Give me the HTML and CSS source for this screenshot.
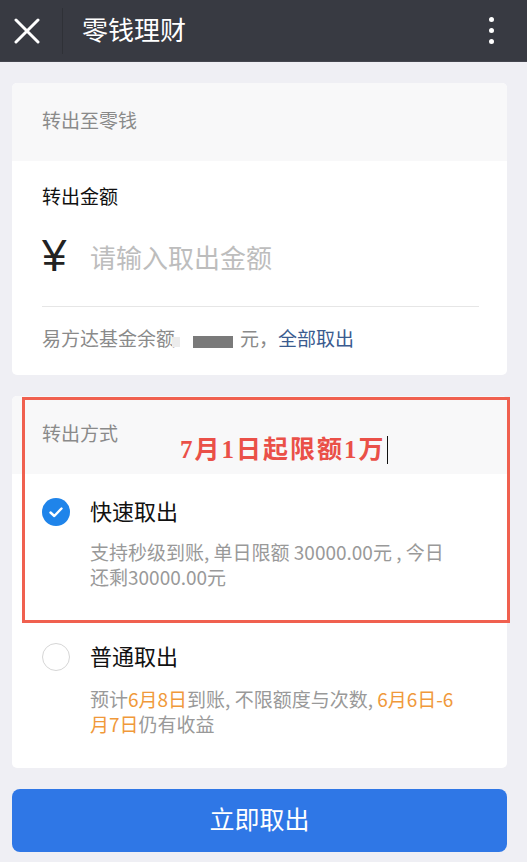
FILE: index.html
```html
<!DOCTYPE html>
<html lang="zh-CN">
<head>
  <meta charset="UTF-8">
  <title>零钱理财</title>
  <link rel="stylesheet" href="styles.css">
</head>
<body>

<div class="topbar">
  <div class="close-icon">
    <svg width="26" height="26" viewBox="0 0 26 26">
      <path d="M2 2 L24 24 M24 2 L2 24" stroke="#fff" stroke-width="3" stroke-linecap="round"/>
    </svg>
  </div>
  <div class="topbar-sep"></div>
  <div class="topbar-title">零钱理财</div>
  <div class="more-icon">
    <span></span><span></span><span></span>
  </div>
</div>

<div class="page">

  <div class="card">
    <div class="card-head">转出至零钱</div>
    <div class="amount">
      <div class="amount-label">转出金额</div>
      <div class="amount-row">
        <span class="yen">¥</span>
        <span class="placeholder">请输入取出金额</span>
      </div>
      <div class="divider"></div>
      <div class="balance">
        易方达基金余额<span class="mask-light"></span><span class="mask"></span>元，<a class="link">全部取出</a>
      </div>
    </div>
  </div>

  <div class="card card-method">
    <div class="card-head">转出方式</div>

    <div class="option">
      <div class="radio checked">
        <svg width="28" height="28" viewBox="0 0 28 28">
          <circle cx="14" cy="14" r="14" fill="#1f84ea"/>
          <path d="M8.5 14.5 L12.3 18 L19.5 10.5" fill="none" stroke="#fff" stroke-width="2.4" stroke-linecap="round" stroke-linejoin="round"/>
        </svg>
      </div>
      <div class="option-body">
        <div class="option-title">快速取出</div>
        <div class="option-desc">支持秒级到账, 单日限额 30000.00元 , 今日<br>还剩30000.00元</div>
      </div>
    </div>

    <div class="option option-normal">
      <div class="radio"></div>
      <div class="option-body">
        <div class="option-title">普通取出</div>
        <div class="option-desc">预计<span class="hl">6月8日</span>到账, 不限额度与次数, <span class="hl">6月6日-6<br>月7日</span>仍有收益</div>
      </div>
    </div>

    <!-- annotation drawn over the screenshot -->
    <div class="note-box"></div>
    <div class="note-text">7月1日起限额1万<span class="caret"></span></div>
  </div>

  <button class="submit-btn">立即取出</button>

</div>

</body>
</html>
```

FILE: styles.css
```css
body {
  margin: 0;
  background: #efeff4;
  font-family: "Noto Sans CJK SC", "Noto Sans", sans-serif;
  width: 527px;
  height: 862px;
  overflow: hidden;
}

.topbar {
  height: 62px;
  background: #383a42;
  display: flex;
  align-items: center;
  border-bottom: 1px solid #45464f;
  box-sizing: border-box;
}

.close-icon {
  width: 26px;
  height: 26px;
  margin-left: 14px;
}

.topbar-sep {
  width: 1px;
  height: 46px;
  background: #2f3137;
  margin-left: 22px;
}

.topbar-title {
  color: #fff;
  font-size: 26px;
  margin-left: 19px;
  flex: 1;
  line-height: 30px;
  margin-top: -3px;
}

.more-icon {
  display: flex;
  flex-direction: column;
  gap: 6px;
  margin-right: 33px;
}

.more-icon span {
  width: 5px;
  height: 5px;
  border-radius: 50%;
  background: #fff;
}

.page {
  padding: 21px 20px 0 12px;
}

.card {
  background: #fff;
  border-radius: 5px;
  position: relative;
}

.card-head {
  background: #f8f8f9;
  height: 78px;
  box-sizing: border-box;
  padding: 26px 30px 0;
  font-size: 19px;
  line-height: 22px;
  color: #8a8a8a;
  border-radius: 5px 5px 0 0;
}

.amount {
  padding: 24px 28px 26px 30px;
}

.amount-label {
  font-size: 19px;
  line-height: 22px;
  color: #111;
}

.amount-row {
  height: 99px;
  display: flex;
  align-items: center;
}

.yen {
  font-family: "Liberation Sans", sans-serif;
  font-size: 44px;
  color: #222;
  width: 48px;
  line-height: 44px;
  margin-top: -2px;
}

.placeholder {
  font-size: 26px;
  color: #bdbdbd;
  line-height: 30px;
}

.divider {
  height: 1px;
  background: #e6e6e6;
}

.balance {
  padding-top: 20px;
  font-size: 19px;
  line-height: 22px;
  color: #8a8a8a;
  display: flex;
  align-items: center;
}

.mask-light {
  display: inline-block;
  width: 8px;
  height: 10px;
  background: #ececec;
  margin: 8px 13px 0 -3px;
}

.mask {
  display: inline-block;
  width: 40px;
  height: 12px;
  background: #7a7a7a;
  margin: 8px 7px 0 0;
}

.link {
  color: #3a5b8f;
}

.card-method {
  margin-top: 21px;
  padding-bottom: 32px;
}

.option {
  display: flex;
  padding: 25px 28px 0 30px;
}

.option-normal {
  padding-top: 55px;
}

.radio {
  width: 28px;
  height: 28px;
  box-sizing: border-box;
  border: 1.5px solid #d6d6d6;
  border-radius: 50%;
  flex-shrink: 0;
  margin-top: -1px;
}

.radio.checked {
  border: none;
}

.option-body {
  margin-left: 20px;
  flex: 1;
}

.option-title {
  font-size: 22px;
  line-height: 28px;
  color: #111;
  margin-top: -3px;
}

.option-desc {
  margin-top: 15px;
  font-size: 19px;
  line-height: 25px;
  color: #999;
}

.option-normal .option-desc {
  margin-top: 17px;
}

.hl {
  color: #f0993a;
}

.note-box {
  position: absolute;
  left: 10px;
  top: 1px;
  width: 488px;
  height: 226px;
  box-sizing: border-box;
  border: 3px solid #f0604f;
}

.note-text {
  position: absolute;
  left: 168px;
  top: 39px;
  font-family: "Liberation Serif", "Noto Sans CJK SC", serif;
  font-weight: bold;
  font-size: 25px;
  letter-spacing: 2px;
  line-height: 30px;
  color: #ea5048;
  display: flex;
  align-items: center;
}

.caret {
  display: inline-block;
  width: 1px;
  height: 28px;
  background: #111;
  margin-left: 1px;
}

.submit-btn {
  display: block;
  width: 100%;
  height: 63px;
  margin-top: 21px;
  padding-bottom: 6px;
  border: none;
  border-radius: 8px;
  background: #2f77e6;
  color: #fff;
  font-family: "Noto Sans CJK SC", sans-serif;
  font-size: 25px;
}
```
